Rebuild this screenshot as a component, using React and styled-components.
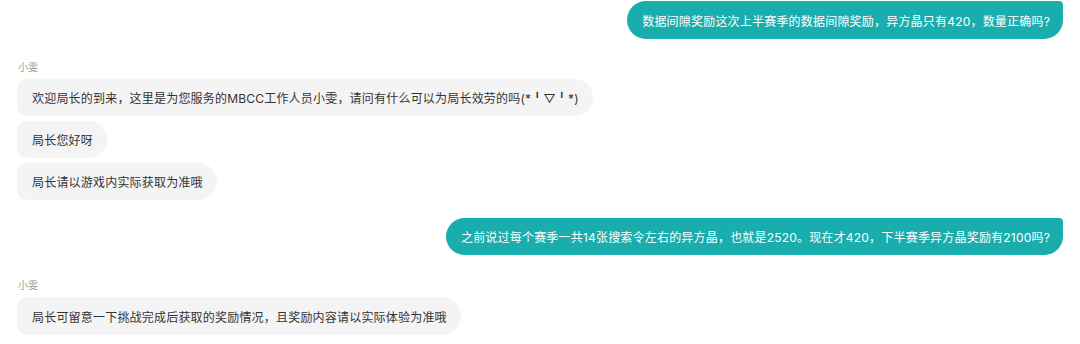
import React from "react";
import styled, { createGlobalStyle } from "styled-components";

const Global = createGlobalStyle`
  html, body { margin: 0; padding: 0; background: #ffffff; }
  body { font-family: Inter, "Noto Sans CJK SC", "Noto Sans", sans-serif; }
`;

const Page = styled.div`
  width: 1080px;
  height: 344px;
  box-sizing: border-box;
  padding: 1px 17px 0 17px;
  display: flex;
  flex-direction: column;
  overflow: hidden;
`;

const UserRow = styled.div`
  display: flex;
  justify-content: flex-end;
  margin-top: ${(p) => p.$top || 0}px;
`;

const UserBubble = styled.div`
  height: ${(p) => p.$h || 37}px;
  display: flex;
  align-items: center;
  padding: 0 13px 0 15px;
  background: #19adae;
  color: #ffffff;
  font-size: 12px;
  letter-spacing: 0.2px;
  border-radius: 19px 4px 19px 19px;
  white-space: nowrap;
`;

const BotGroup = styled.div`
  display: flex;
  flex-direction: column;
  align-items: flex-start;
  gap: 5px;
  margin-top: ${(p) => p.$top || 0}px;
`;

const Name = styled.div`
  font-size: 10px;
  line-height: 14px;
  color: #9a9a9a;
  padding-left: 1px;
`;

const BotBubble = styled.div`
  height: ${(p) => p.$h || 37}px;
  display: flex;
  align-items: center;
  padding: 0 14px 0 15px;
  background: #f4f4f4;
  color: #333333;
  font-size: 12px;
  letter-spacing: 0.2px;
  border-radius: 10px 19px 19px 10px;
  white-space: nowrap;
`;

export default function App() {
  return (
    <>
      <Global />
      <Page>
        <UserRow>
          <UserBubble $h={38}>
            数据间隙奖励这次上半赛季的数据间隙奖励，异方晶只有420，数量正确吗?
          </UserBubble>
        </UserRow>
        <BotGroup $top={21}>
          <Name>小雯</Name>
          <BotBubble>
            欢迎局长的到来，这里是为您服务的MBCC工作人员小雯，请问有什么可以为局长效劳的吗(*╹▽╹*)
          </BotBubble>
          <BotBubble>局长您好呀</BotBubble>
          <BotBubble>局长请以游戏内实际获取为准哦</BotBubble>
        </BotGroup>
        <UserRow $top={18}>
          <UserBubble>
            之前说过每个赛季一共14张搜索令左右的异方晶，也就是2520。现在才420，下半赛季异方晶奖励有2100吗?
          </UserBubble>
        </UserRow>
        <BotGroup $top={23}>
          <Name>小雯</Name>
          <BotBubble $h={38}>局长可留意一下挑战完成后获取的奖励情况，且奖励内容请以实际体验为准哦</BotBubble>
        </BotGroup>
      </Page>
    </>
  );
}
